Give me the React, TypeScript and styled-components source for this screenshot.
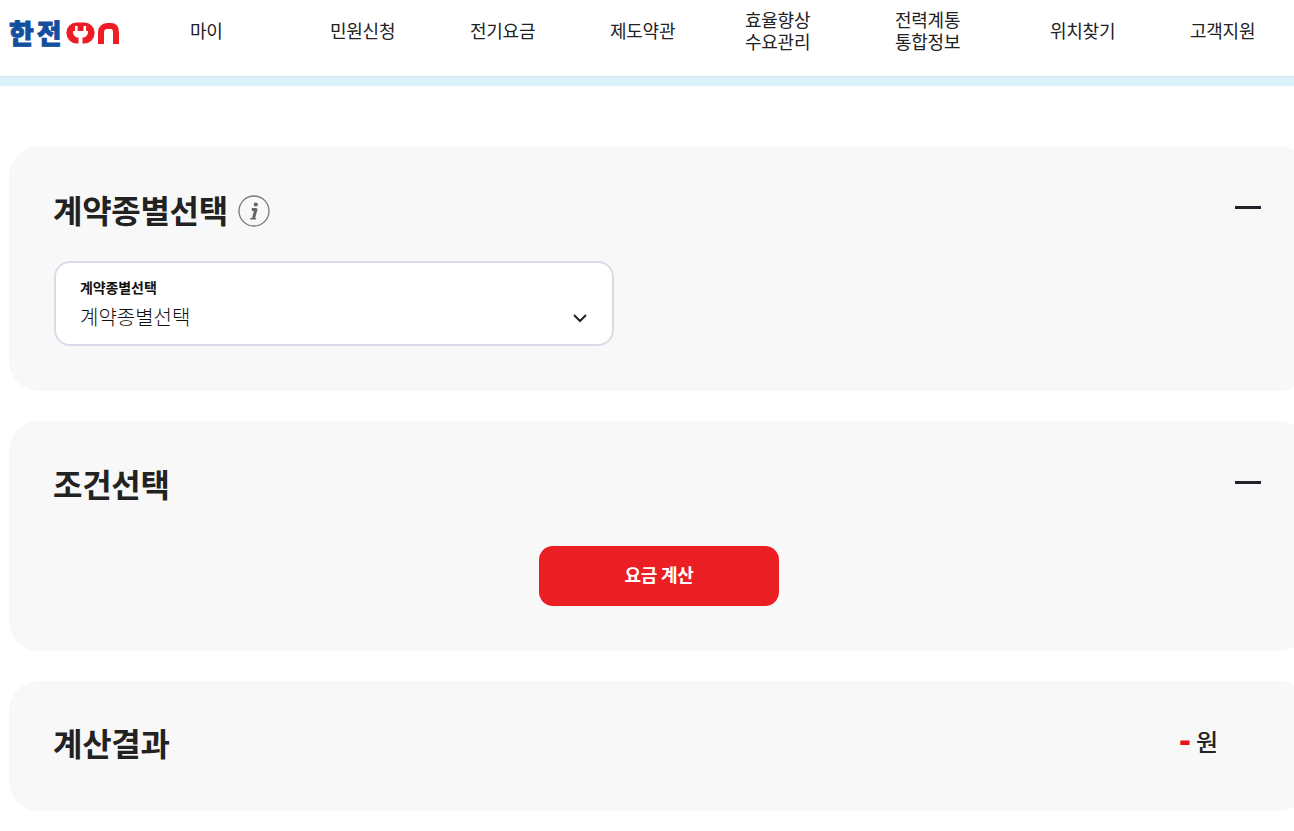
import React from "react";
import styled, { createGlobalStyle } from "styled-components";

const FONT = `"Noto Sans CJK KR", "Noto Sans", sans-serif`;

const Global = createGlobalStyle`
  html, body { margin: 0; padding: 0; background: #fff; overflow: hidden; height: 831px; }
  body { font-family: ${FONT}; color: #222; }
`;

const Page = styled.div`
  width: 1294px;
  height: 831px;
  overflow: hidden;
`;

const Header = styled.header`
  display: flex;
  align-items: center;
  height: 76px;
  padding-left: 9px;
  box-sizing: border-box;
`;

const Logo = styled.div`
  display: flex;
  align-items: center;
  width: 181px;
  height: 26px;
  margin-top: -11px;
  flex: none;
`;

const LogoWord = styled.span`
  width: 57px;
  flex: none;
  font-size: 27px;
  font-weight: 900;
  line-height: 26px;
  letter-spacing: 3px;
  color: #12509f;
  -webkit-text-stroke: 0.8px #12509f;
`;

const LogoMark = styled.svg`
  flex: none;
  width: 53px;
  height: 22px;
`;

const Nav = styled.nav`
  display: flex;
  align-items: center;
  margin-top: -16px;
`;

const NavItem = styled.a<{ $w: number }>`
  width: ${(p) => p.$w}px;
  flex: none;
  font-size: 18px;
  line-height: 22px;
  letter-spacing: -0.25px;
  color: #222;
`;

const NavLabel = styled.span`
  display: inline-block;
  text-align: center;
`;

const Band = styled.div`
  height: 9px;
  background: #dbf2f8;
  border-top: 1px solid #d5e3ee;
`;

const Main = styled.main`
  display: flex;
  flex-direction: column;
  gap: 30px;
  padding: 60px 0 0 9px;
  width: 1300px;
`;

const Card = styled.section<{ $h: number; $top: number }>`
  position: relative;
  height: ${(p) => p.$h}px;
  box-sizing: border-box;
  padding: ${(p) => p.$top}px 45px 0;
  background: #f8f8f8;
  border-radius: 30px;
`;

const TitleRow = styled.div`
  display: flex;
  align-items: center;
  justify-content: space-between;
  height: 52px;
`;

const TitleGroup = styled.div`
  display: flex;
  align-items: center;
  gap: 10px;
`;

const Title = styled.h2`
  margin: 0 0 0 -1px;
  font-size: 32px;
  line-height: 50px;
  font-weight: 700;
  letter-spacing: -0.3px;
  color: #222;
`;

const Collapse = styled.span`
  position: absolute;
  top: 60px;
  right: 48px;
  width: 26px;
  height: 3px;
  background: #22232b;
`;

const Info = styled.svg`
  width: 32px;
  height: 32px;
  flex: none;
  margin-top: 4px;
`;

const SelectBox = styled.div`
  position: relative;
  box-sizing: border-box;
  width: 560px;
  height: 85px;
  margin-top: 26px;
  padding: 14px 24px 0;
  background: #fff;
  border: 2px solid #d9dce8;
  border-radius: 16px;
`;

const SelectLabel = styled.div`
  font-size: 14px;
  line-height: 20px;
  font-weight: 700;
  letter-spacing: -0.1px;
  color: #111;
`;

const SelectValue = styled.div`
  margin-top: 6px;
  font-size: 20px;
  line-height: 28px;
  font-weight: 300;
  color: #111;
`;

const Chevron = styled.svg`
  position: absolute;
  right: 24px;
  top: 47px;
  width: 16px;
  height: 16px;
`;

const ButtonRow = styled.div`
  display: flex;
  justify-content: center;
  margin-top: 37px;
`;

const CalcButton = styled.button`
  width: 240px;
  height: 60px;
  padding: 0 0 4px;
  border: 0;
  border-radius: 14px;
  background: #eb1e24;
  color: #fff;
  font-family: ${FONT};
  font-size: 18px;
  font-weight: 700;
  letter-spacing: -0.3px;
`;

const Result = styled.div`
  position: absolute;
  top: 42px;
  right: 91px;
  display: flex;
  align-items: center;
  gap: 5px;
  font-size: 24px;
  line-height: 36px;
  font-weight: 500;
  color: #222;
`;

const Dash = styled.span`
  transform: translateY(-1px);
  font-family: "Liberation Sans", sans-serif;
  font-size: 36px;
  font-weight: 700;
  line-height: 36px;
  color: #e8141c;
`;

const navItems: { w: number; lines: string[] }[] = [
  { w: 140, lines: ["마이"] },
  { w: 140, lines: ["민원신청"] },
  { w: 140, lines: ["전기요금"] },
  { w: 135, lines: ["제도약관"] },
  { w: 150, lines: ["효율향상", "수요관리"] },
  { w: 155, lines: ["전력계통", "통합정보"] },
  { w: 140, lines: ["위치찾기"] },
  { w: 70, lines: ["고객지원"] },
];

export default function App() {
  return (
    <Page>
      <Global />
      <Header>
        <Logo>
          <LogoWord>한전</LogoWord>
          <LogoMark viewBox="0 0 53 22" fill="none">
            <rect x="0.500" y="0.500" width="28" height="21" rx="10" fill="#ee1c25" />
            <rect x="9" y="4" width="2.600" height="5" fill="#fff" />
            <rect x="17.500" y="4" width="2.600" height="5" fill="#fff" />
            <path d="M7 9h15v1c0 3.500-2.500 5.500-5.500 5.500V22h-4v-6.500C9.500 15.500 7 13.500 7 10z" fill="#fff" />
            <path d="M35 22V10.500C35 6.500 37.500 4 41 4h4c3.500 0 5 2.500 5 6.500V22" stroke="#ee1c25" strokeWidth="6" />
          </LogoMark>
        </Logo>
        <Nav>
          {navItems.map((it) => (
            <NavItem key={it.lines[0]} $w={it.w}>
              <NavLabel>
                {it.lines.map((l, i) => (
                  <React.Fragment key={l}>
                    {i > 0 && <br />}
                    {l}
                  </React.Fragment>
                ))}
              </NavLabel>
            </NavItem>
          ))}
        </Nav>
      </Header>
      <Band />
      <Main>
        <Card $h={245} $top={37}>
          <TitleRow>
            <TitleGroup>
              <Title>계약종별선택</Title>
              <Info viewBox="0 0 32 32" fill="none">
                <circle cx="16" cy="16" r="15" stroke="#777" strokeWidth="1.300" />
                <circle cx="17.800" cy="9.500" r="2.100" fill="#666" />
                <path d="M13.800 14.500h4.200l-2.500 8.500" stroke="#666" strokeWidth="3" strokeLinejoin="round" />
                <path d="M12.800 23.800h4.600" stroke="#666" strokeWidth="1.600" strokeLinecap="round" />
              </Info>
            </TitleGroup>
            <Collapse />
          </TitleRow>
          <SelectBox>
            <SelectLabel>계약종별선택</SelectLabel>
            <SelectValue>계약종별선택</SelectValue>
            <Chevron viewBox="0 0 16 16" fill="none">
              <path d="M2 5l6 6 6-6" stroke="#222" strokeWidth="2" />
            </Chevron>
          </SelectBox>
        </Card>
        <Card $h={230} $top={36}>
          <TitleRow>
            <Title>조건선택</Title>
            <Collapse />
          </TitleRow>
          <ButtonRow>
            <CalcButton>요금 계산</CalcButton>
          </ButtonRow>
        </Card>
        <Card $h={130} $top={35}>
          <TitleRow>
            <Title>계산결과</Title>
          </TitleRow>
          <Result>
            <Dash>-</Dash>
            <span>원</span>
          </Result>
        </Card>
      </Main>
    </Page>
  );
}
